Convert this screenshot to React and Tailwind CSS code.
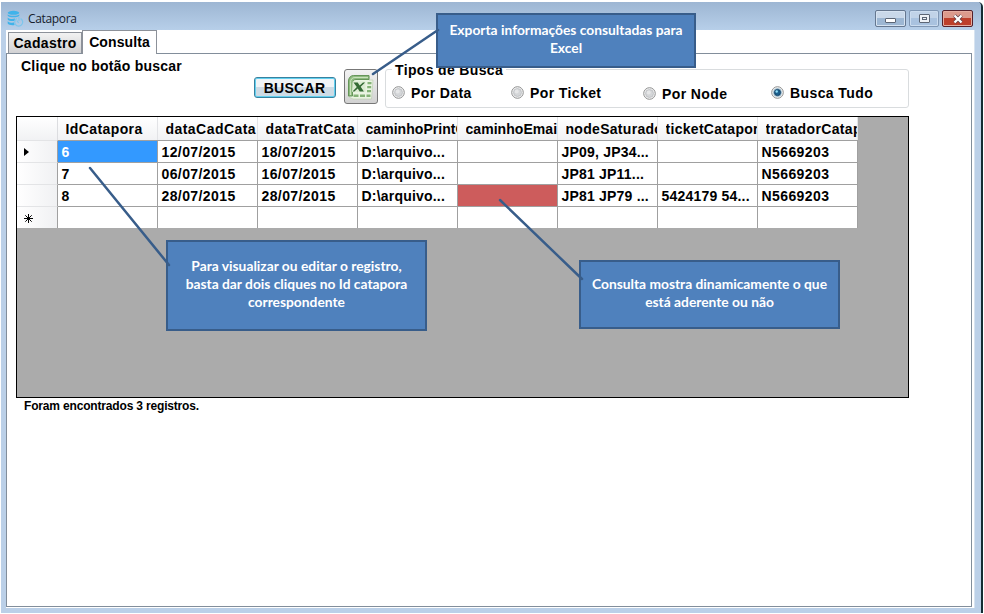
import React from "react";

const columns = [
  { name: "IdCatapora", className: "tracking-[0.4px]" },
  { name: "dataCadCata", className: "tracking-[0.45px]" },
  { name: "dataTratCata", className: "tracking-[0.4px]" },
  { name: "caminhoPrintCatapora", className: "tracking-[0.05px]" },
  { name: "caminhoEmail", className: "tracking-[0.05px]" },
  { name: "nodeSaturado", className: "tracking-[0.3px]" },
  { name: "ticketCatapora", className: "tracking-[0.3px]" },
  { name: "tratadorCatapora", className: "tracking-[0.35px]" },
];

const rows = [
  ["6", "12/07/2015", "18/07/2015", "D:\\arquivo...", "", "JP09, JP34...", "", "N5669203"],
  ["7", "06/07/2015", "16/07/2015", "D:\\arquivo...", "", "JP81 JP11...", "", "N5669203"],
  ["8", "28/07/2015", "28/07/2015", "D:\\arquivo...", "", "JP81 JP79 ...", "5424179 54...", "N5669203"],
  ["", "", "", "", "", "", "", ""],
];

function DatabaseIcon() {
  return (
    <svg width="17" height="17" viewBox="0 0 17 17" fill="none">
      <g fill="#3fb3ea">
        <ellipse cx="6.5" cy="2.8" rx="5.8" ry="2" />
        <path d="M.7 4.2c1.5 2 9.8 2 11.6 0v1.6c-1.8 2-10 2-11.6 0z" />
        <path d="M.7 7.4c1.5 1.8 5 1.8 7.4 1.2L7.4 11C5 11.300 1.500 11 .7 9.600z" />
        <path d="M.7 11.200c1.500 1.500 4 1.600 6.300 1.400l.6 2.400C5 15.500 1.500 15 .7 13.600z" />
      </g>
      <path d="M10 8.500a4 4 0 1 0 3.600.1M12 6.800v4M9.800 10.500l1.800 2.400" stroke="#7cc6ec" strokeWidth="1.200" />
    </svg>
  );
}

function ExcelIcon() {
  return (
    <svg width="28" height="28" viewBox="0 0 28 28" fill="none">
      <path d="M2 24V8c0-3 2-5 5-5h15v4l4 0-1.500 19H6z" fill="#eaf4e2" stroke="#b6cba9" strokeWidth=".6" />
      <path d="M1.500 23V8c0-3 2-5.500 5-5.500h15.500v4H9c-2.500 0-3.500 1.500-3.500 4V23z" fill="#8fbb80" stroke="#5c8f50" strokeWidth=".9" />
      <path d="M3.500 22V9.500c0-3 1.500-5 4.500-5h13" stroke="#cfe6c3" strokeWidth=".9" />
      <path d="M5.500 8.500h13V19H5z" fill="#dcebd2" />
      <g fill="#84b276">
        <path d="M20.500 9h4v2.300h-4zM20.200 13h4v2.300h-4zM20 17h4v2.300h-4zM19.500 21.500h4V24h-4zM13 21.500h5V24h-5zM6.500 21.500h5V24h-5z" />
      </g>
      <path d="M6.500 9.500h4.200l2 2.900L16 9.500h2.100l-4.400 4.200 3.200 4.800h-4.200l-2-3-3.300 3H5.500l4.300-4.500z" fill="#356b35" />
    </svg>
  );
}

function Radio({ label, checked, className }) {
  return (
    <label className={"flex items-start whitespace-nowrap " + className}>
      <svg width="13" height="13" viewBox="0 0 13 13" className="mt-[2px] mr-[6px] shrink-0">
        <circle cx="6.500" cy="6.500" r="5.800" fill="#f4f4f4" stroke="#8e8f8f" />
        <circle cx="6.500" cy="6.500" r="4" fill={checked ? "#b5d3e2" : "#d4d6d8"} stroke={checked ? "#8fb0c4" : "#b6b9bd"} strokeWidth=".7" />
        {checked && <circle cx="6.500" cy="6.500" r="3.100" fill="#1b5f8d" stroke="#123b5e" strokeWidth=".8" />}
        <circle cx="5.700" cy="5.500" r={checked ? 1.2 : 2} fill={checked ? "#8fdcf6" : "#e6e7e8"} />
      </svg>
      <span className="leading-[18px]">{label}</span>
    </label>
  );
}

function Callout({ className, children }) {
  return (
    <div className={"absolute flex flex-col items-center border-[2.5px] border-[#385d8a] bg-[#4f81bd] text-center font-[Lato,sans-serif] text-[13.8px] leading-[18px] font-bold tracking-normal whitespace-nowrap text-white " + className}>
      {children}
    </div>
  );
}

function TitleBar() {
  return (
    <header className="flex h-7 shrink-0 bg-linear-to-b from-[#9db6d3] to-[#b7cfe9] pl-[6px]">
      <div className="flex pt-2">
        <DatabaseIcon />
        <span className="ml-[4px] font-['Open_Sans',sans-serif] text-[12px] leading-[17px] font-normal tracking-[-0.35px] text-[#16202c]">Catapora</span>
      </div>
      <div className="mr-[8px] ml-auto flex gap-[3px] pt-2">
        <div className="flex h-[17px] w-[31px] items-end justify-center rounded-[2px] border border-[#65778f] bg-linear-to-b from-[#c9d8e9] from-45% to-[#9db7d3] to-50% pb-[3px] shadow-[inset_0_0_0_1px_#d6e3f1]">
          <div className="h-[5px] w-[11px] rounded-[1px] border border-[#5c6675] bg-white" />
        </div>
        <div className="flex h-[17px] w-[30px] items-center justify-center rounded-[2px] border border-[#8097b4] bg-linear-to-b from-[#c1d3e8] from-45% to-[#a9c2df] to-50% shadow-[inset_0_0_0_1px_#cbdcef]">
          <div className="flex h-[9px] w-[11px] items-center justify-center rounded-[1px] border border-[#5c6675] bg-[#eef2f7]">
            <div className="h-[3px] w-[5px] border border-[#5c6675]" />
          </div>
        </div>
        <div className="flex h-[17px] w-[31px] items-center justify-center rounded-[2px] border border-[#55202a] bg-linear-to-b from-[#dc9a8c] from-45% to-[#bd3f2b] to-50% shadow-[inset_0_0_0_1px_#e4aca0]">
          <svg width="12" height="10" viewBox="0 0 12 10">
            <path d="M2.500 1.500l7 7M9.500 1.500l-7 7" stroke="#604049" strokeWidth="3.800" />
            <path d="M2.500 1.500l7 7M9.500 1.500l-7 7" stroke="white" strokeWidth="2.300" />
          </svg>
        </div>
      </div>
    </header>
  );
}

function DataGrid() {
  return (
    <div className="ml-[9px] h-[282px] w-[893px] border border-black bg-[#ababab]">
      <div className="w-[841px]">
        <div className="flex h-[23px] bg-linear-to-b from-white to-[#f1f2f4]">
          <div className="w-[41px] shrink-0 border-r border-[#dcdde0]" />
          {columns.map((column) => (
            <div key={column.name} className="w-[100px] shrink-0 border-r border-[#e2e3e6] pl-[7.5px]">
              <div className={"w-[91px] overflow-hidden pt-px leading-[22px] whitespace-nowrap " + column.className}>{column.name}</div>
            </div>
          ))}
        </div>
        {rows.map((row, r) => (
          <div key={r} className="flex h-[22px]">
            <div className="flex w-[41px] shrink-0 items-center border-t border-r border-t-[#e3e4e6] border-r-[#a0a0a0] bg-linear-to-r from-white to-[#f0f1f3] pt-px pl-[7px]">
              {r === 0 && (
                <svg width="5" height="8" viewBox="0 0 5 8"><path d="M0 0l5 4-5 4z" fill="black" /></svg>
              )}
              {r === 3 && (
                <svg width="9" height="9" viewBox="0 0 9 9"><path d="M4.500 0v9M0 4.500h9M1.300 1.300l6.400 6.400M7.700 1.300L1.300 7.700" stroke="black" /></svg>
              )}
            </div>
            {row.map((value, c) => (
              <div
                key={c}
                className={
                  "w-[100px] shrink-0 overflow-hidden border-t border-r border-[#a0a0a0] pl-[3.5px] leading-[22px] whitespace-nowrap " +
                  (c === 3 || c === 5 || c === 6 ? "tracking-[0.2px] " : "") +
                  (r === 0 && c === 0 ? "bg-[#3399ff] text-white" : r === 2 && c === 4 ? "bg-[#cd5c5c]" : "bg-white")
                }
              >
                {value}
              </div>
            ))}
          </div>
        ))}
      </div>
    </div>
  );
}

export default function App() {
  return (
    <div className="relative h-[614px] w-[984px] overflow-hidden bg-white pt-[2px] pl-px font-['Liberation_Sans',Arial,sans-serif] text-[14px] font-bold tracking-[0.4px] text-black">
      <div className="flex h-[611px] w-[982px] flex-col overflow-hidden rounded-tr-[5px] border-r-2 border-r-[#142c33] bg-[#bbd0e8]">
        <TitleBar />
        <div className="mr-[6px] ml-[5px] flex h-[578px] flex-col border-r border-[#d7e3f0] bg-white">
          <nav className="flex h-[23px] shrink-0 items-end">
            <div className="ml-[2px] flex h-[21px] w-[74px] items-center justify-center border border-b-0 border-[#8c9199] bg-linear-to-b from-[#f2f2f2] to-[#d2d2d4] pt-px tracking-[0.3px]">Cadastro</div>
            <div className="z-10 -mb-px flex h-[24px] w-[75px] items-center justify-center border border-b-0 border-[#8c9199] bg-white pb-px tracking-[0.1px]">Consulta</div>
          </nav>
          <main className="mr-[2px] h-[554px] border border-[#828e9b] bg-white">
            <section className="flex h-[62px]">
              <div className="ml-[14px] w-[233px] pt-[2px] leading-[21px] tracking-[0.25px]">Clique no botão buscar</div>
              <button className="mt-[23px] flex h-[21px] w-[82px] items-center justify-center rounded-[3px] border border-[#39819f] bg-linear-to-b from-[#f0f4f7] from-45% to-[#cddbe5] to-50% pt-[2px] pr-px font-bold tracking-[0.3px] shadow-[inset_0_0_0_1px_#62d0ef]">BUSCAR</button>
              <div className="mt-[15px] ml-[8px] flex h-[35px] w-[34px] items-center justify-center rounded-[3px] border border-[#777] bg-linear-to-b from-[#f2f2f2] to-[#d2d2d2]">
                <ExcelIcon />
              </div>
              <div className="mt-[15px] ml-[7px] h-[39px] w-[524px] rounded-[3px] border border-[#d9dcde]">
                <div className="-mt-[8px] ml-[6px] h-[17px] w-[114px] bg-white pl-[3px] leading-[17px] tracking-[0.35px]">Tipos de Busca</div>
                <div className="flex pt-[5px] pl-[6px]">
                  <Radio label="Por Data" className="w-[119px]" />
                  <Radio label="Por Ticket" className="w-[132px]" />
                  <Radio label="Por Node" className="w-[128px] pt-px" />
                  <Radio label="Busca Tudo" checked className="" />
                </div>
              </div>
            </section>
            <DataGrid />
            <p className="ml-[17px] text-[12px] leading-[17px] tracking-[-0.17px]">Foram encontrados 3 registros.</p>
          </main>
        </div>
      </div>

      <Callout className="top-[13px] left-[436px] h-[55px] w-[260px] pt-[6px]">
        <span>Exporta informações consultadas para</span>
        <span>Excel</span>
      </Callout>
      <Callout className="top-[240px] left-[166px] h-[91px] w-[261px] pt-[15px]">
        <span>Para visualizar ou editar o registro,</span>
        <span>basta dar dois cliques no Id catapora</span>
        <span>correspondente</span>
      </Callout>
      <Callout className="top-[260px] left-[579px] h-[69px] w-[261px] pt-[13px]">
        <span>Consulta mostra dinamicamente o que</span>
        <span>está aderente ou não</span>
      </Callout>
      <svg className="absolute inset-0 z-20" width="984" height="614" fill="none" stroke="#385d8a" strokeWidth="2.500" strokeLinecap="round">
        <path d="M438 30L373 74M90 168l79 97M500 200l82 79" />
      </svg>
    </div>
  );
}
